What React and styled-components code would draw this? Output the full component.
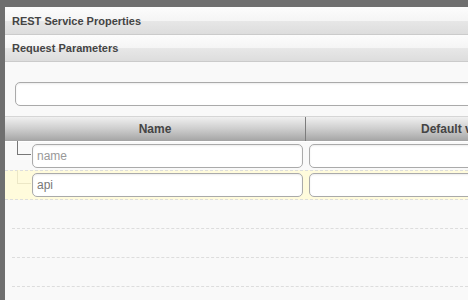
import React from "react"
import styled, { createGlobalStyle } from "styled-components"

const GlobalStyle = createGlobalStyle`
    html, body {
        margin: 0;
        padding: 0;
        background: #6f6f6f;
        font-family: "Liberation Sans", Arial, sans-serif;
        overflow: hidden;
    }
`

const rows = [
	{ name: "name", value: "", placeholder: true },
	{ name: "api", value: "", selected: true },
]

const App = () => {
	return (
		<Screen>
			<GlobalStyle />
			<Panel>
				<SectionHeader $first>REST Service Properties</SectionHeader>
				<SectionHeader>Request Parameters</SectionHeader>
				<Body>
					<SearchBar>
						<SearchInput />
					</SearchBar>
					<Table>
						<HeadRow>
							<HeadCell $width="300px">Name</HeadCell>
							<HeadCell $indent="115px">Default value</HeadCell>
						</HeadRow>
						{rows.map((r, i) => (
							<Row key={i} $selected={r.selected}>
								<NameCell>
									<Tree $faint={r.selected} />
									<CellInput $muted={r.placeholder}>{r.name}</CellInput>
								</NameCell>
								<ValueCell>
									<CellInput>{r.value}</CellInput>
								</ValueCell>
							</Row>
						))}
						<EmptyRow />
						<EmptyRow />
						<EmptyRow />
						<EmptyRow />
					</Table>
				</Body>
			</Panel>
		</Screen>
	)
}

export default App

const Screen = styled.div`
    width: 468px;
    height: 300px;
    padding: 7px 0 0 5px;
    box-sizing: border-box;
    display: flex;
    overflow: hidden;
`

const Panel = styled.div`
    flex: 1;
    display: flex;
    flex-direction: column;
    background: #f9f9f9;
    min-width: 0;
    overflow: hidden;
    & > * {
        flex-shrink: 0;
    }
`

const SectionHeader = styled.div`
    height: ${p => (p.$first ? "28px" : "27px")};
    box-sizing: border-box;
    display: flex;
    align-items: center;
    padding-left: 7px;
    font-size: 11px;
    font-weight: bold;
    color: #444;
    background: linear-gradient(#fcfcfc, #f5f5f5 50%, #e7e7e7 52%, #dddddd);
    border-bottom: 1px solid #cbcbcb;
`

const Body = styled.div`
    display: flex;
    flex-direction: column;
`

const SearchBar = styled.div`
    padding: 20px 0 10px 10px;
`

const SearchInput = styled.div`
    height: 24px;
    margin-right: -20px;
    box-sizing: border-box;
    background: #fff;
    border: 1px solid #aaa;
    border-radius: 5px;
    box-shadow: inset 0 1px 2px rgba(0, 0, 0, 0.08);
`

const Table = styled.div`
    display: flex;
    flex-direction: column;
    & > * {
        flex-shrink: 0;
    }
`

const HeadRow = styled.div`
    display: flex;
    height: 26px;
    box-sizing: border-box;
    border-top: 1px solid #d6d6d6;
    border-bottom: 1px solid #fff;
    background: linear-gradient(#f0f0f0, #cdcdcd 50%, #a4a4a4);
`

const HeadCell = styled.div`
    ${p => (p.$width ? `width: ${p.$width}; border-right: 1px solid #7c7c7c;` : "flex: 1;")}
    flex-shrink: 0;
    display: flex;
    align-items: center;
    justify-content: ${p => (p.$indent ? "flex-start" : "center")};
    padding-left: ${p => p.$indent || "0"};
    font-size: 12px;
    font-weight: bold;
    color: #444;
    white-space: nowrap;
    overflow: hidden;
`

const Row = styled.div`
    display: flex;
    height: 29px;
    box-sizing: border-box;
    border-bottom: 1px dashed #ddd;
    background: ${p => (p.$selected ? "#fffbdc" : "transparent")};
    ${p => p.$selected && "border-top: 1px dashed #ddd; margin-top: -1px; height: 30px;"}
`

const EmptyRow = styled.div`
    height: 29px;
    box-sizing: border-box;
    margin-left: 7px;
    border-bottom: 1px dashed #ddd;
`

const NameCell = styled.div`
    width: 300px;
    flex-shrink: 0;
    display: flex;
    align-items: center;
    padding: 0 2px 0 12px;
    box-sizing: border-box;
`

const ValueCell = styled.div`
    flex: 1;
    display: flex;
    align-items: center;
    padding-left: 4px;
    margin-right: -20px;
`

const Tree = styled.div`
    width: 13px;
    height: 13px;
    margin-top: -16px;
    margin-right: 1px;
    flex-shrink: 0;
    border-left: 1px solid ${p => (p.$faint ? "#ece7c6" : "#777")};
    border-bottom: 1px solid ${p => (p.$faint ? "#ece7c6" : "#777")};
`

const CellInput = styled.div`
    flex: 1;
    height: 24px;
    box-sizing: border-box;
    display: flex;
    align-items: center;
    padding-left: 4px;
    font-size: 12px;
    color: ${p => (p.$muted ? "#999" : "#777")};
    background: #fff;
    border: 1px solid #aaa;
    border-radius: 5px;
    box-shadow: inset 0 1px 2px rgba(0, 0, 0, 0.08);
`
